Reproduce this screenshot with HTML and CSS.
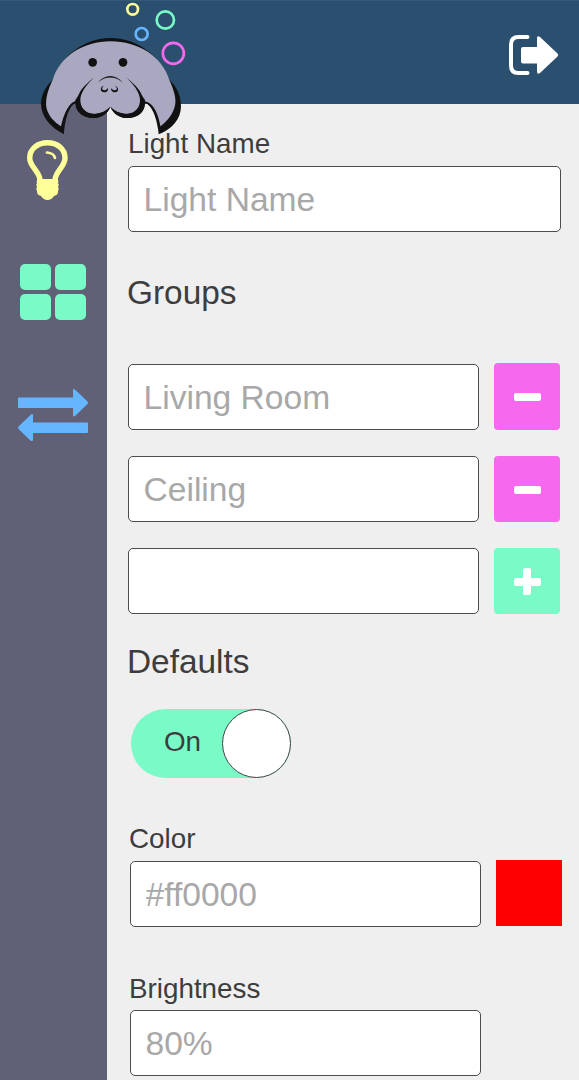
FILE: index.html
```html
<!DOCTYPE html>
<html lang="en">
<head>
<meta charset="utf-8">
<title>Light settings</title>
<link rel="stylesheet" href="styles.css">
</head>
<body>
<div class="app">
  <header class="topbar">
    <svg class="logo" viewBox="0 0 510 435" aria-label="Manatee">
      <g fill="none" stroke-width="8">
        <circle cx="308" cy="28" r="16" stroke="#ffff99"/>
        <circle cx="406" cy="60" r="26" stroke="#79fac7"/>
        <circle cx="335" cy="102" r="18" stroke="#66b5ff"/>
        <circle cx="430" cy="160" r="31.500" stroke="#f668ee"/>
      </g>
      <path fill="#111" d="M68 240C95 165 165 114 242 114S390 165 418 240C440 258 453 288 453 318C453 358 427 386 386 403C383 370 371 315 344 309C346 335 324 354 292 354C268 354 250 341 241 320C233 341 214 354 190 354C160 354 138 335 137 310C116 315 104 365 102 403C62 382 33 352 33 310C34 282 47 259 68 240Z"/>
      <path fill="#aaa8c0" d="M68 240C90 168 160 124 242 124S396 168 418 240C432 270 441 300 434 320C427 345 410 365 391 379C386 345 371 308 344 304L335 300C334 325 314 342 292 342C270 342 253 332 241 320C229 332 212 342 190 342C168 342 150 325 148 300L137 303C116 308 100 345 93 379C72 366 55 348 49 322C46 296 54 268 68 240Z"/>
      <path fill="#111" d="M193 232C170 250 153 267 146 284Q142 292 136 300L136 312C139 342 165 354 190 354C214 354 233 341 241 320C228 335 210 341 190 341C165 341 150 321 151 298C152 278 170 253 193 232Z"/>
      <path fill="#111" d="M288 232C311 250 328 267 335 284Q339 292 345 300L345 312C342 342 317 354 292 354C269 354 250 341 241 320C254 335 272 341 292 341C316 341 331 321 330 298C329 278 311 253 288 232Z"/>
      <circle cx="188" cy="187" r="13" fill="#111"/>
      <circle cx="279" cy="187" r="13" fill="#111"/>
      <path fill="#111" d="M203 248C225 221 256 221 279 248C256 227 225 227 203 248Z"/>
      <path fill="#111" d="M222 257C208 260 210 276 223 277C231 277 236 271 233 264C229 272 220 273 217 268C215 264 218 260 222 257Z"/>
      <path fill="#111" d="M254 257C268 260 267 276 255 277C247 277 242 271 244 264C248 272 258 273 260 268C262 264 259 260 254 257Z"/>
    </svg>
    <button class="logout" aria-label="Log out">
      <svg width="51" height="42" viewBox="0 0 51 42">
        <path d="M19.500 3H10.500Q3 3 3 10.500V31.500Q3 39 10.500 39H19.500" fill="none" stroke="#fff" stroke-width="4" stroke-linecap="round"/>
        <path d="M15 13H29V4.500Q29 1 32 3L49.500 19.500Q51 21 49.500 22.500L32 39Q29 41 29 37.500V29.500H15Q13 29.500 13 27.500V15Q13 13 15 13Z" fill="#fff"/>
      </svg>
    </button>
  </header>
  <div class="body">
    <nav class="sidebar">
      <a class="nav-bulb" aria-label="Lights">
        <svg width="42" height="62" viewBox="0 0 42 62">
          <path d="M13 40C12.500 31 2.700 27 2.700 18C2.700 8.500 11 2.800 20.500 2.800S38 8.500 38 18C38 27 28.500 31 28 40" fill="none" stroke="#ffff99" stroke-width="5.400"/>
          <path d="M20 12.500Q27 13 28 18" fill="none" stroke="#ffff99" stroke-width="2.700" stroke-linecap="round"/>
          <path d="M10.500 39H30.500Q32 41 31 43Q32.500 45 31 47Q32.500 49 31 51Q31.500 55 27 56Q24.500 60 20.500 60T14 56Q9.500 55 10 51Q8.500 49 10 47Q8.500 45 10 43Q9 41 10.500 39Z" fill="#ffff99"/>
        </svg>
      </a>
      <a class="nav-groups" aria-label="Groups"><i></i><i></i><i></i><i></i></a>
      <a class="nav-swap" aria-label="Transitions">
        <svg width="72" height="54" viewBox="0 0 72 54" fill="#66b5ff">
          <path d="M2 9.500H56V2.500Q56 0 58.500 2L70.500 13.500Q71.500 14.700 70.500 16L58.500 27.500Q56 29.500 56 27V20H2Q1 20 1 19V10.500Q1 9.500 2 9.500Z"/>
          <path d="M70 34.500H16V27.500Q16 25 13.500 27L1.500 38.500Q.5 39.700 1.500 41L13.500 52.500Q16 54 16 51.500V45H70Q71 45 71 44V35.500Q71 34.500 70 34.500Z"/>
        </svg>
      </a>
    </nav>
    <main class="content">
      <label class="label" for="name">Light Name</label>
      <input class="field" id="name" placeholder="Light Name">
      <h2 class="heading heading-groups">Groups</h2>
      <div class="groups">
        <div class="row"><input class="field" placeholder="Living Room"><button class="btn remove" aria-label="Remove"></button></div>
        <div class="row"><input class="field" placeholder="Ceiling"><button class="btn remove" aria-label="Remove"></button></div>
        <div class="row"><input class="field"><button class="btn add" aria-label="Add"></button></div>
      </div>
      <h2 class="heading heading-defaults">Defaults</h2>
      <button class="toggle"><span>On</span><span class="knob"></span></button>
      <section class="defaults">
        <label class="label" for="color">Color</label>
        <div class="row color-row"><input class="field" id="color" placeholder="#ff0000"><span class="swatch"></span></div>
        <label class="label" for="brightness">Brightness</label>
        <input class="field brightness" id="brightness" placeholder="80%">
      </section>
    </main>
  </div>
</div>
</body>
</html>
```
FILE: styles.css
```css
* { box-sizing: border-box; }
body { margin: 0; background: #efefef; color: #3d3d3d; font-family: "Liberation Sans", Arial, sans-serif; }
button { border: 0; padding: 0; margin: 0; font: inherit; color: inherit; background: none; }
svg { display: block; }
.app { height: 1080px; overflow: hidden; display: flex; flex-direction: column; }
.topbar { position: relative; flex: none; height: 104px; background: #2b4f6e; border-top: 1px solid #365977; display: flex; justify-content: flex-end; padding: 33px 20px 0 0; }
.logo { position: absolute; left: 30px; top: -1px; width: 170px; height: 145px; z-index: 1; }
.logout { height: 42px; }
.body { flex: 1; display: flex; }
.sidebar { flex: none; width: 107px; background: #606176; display: flex; flex-direction: column; align-items: flex-start; padding-top: 36px; }
.nav-bulb { margin-left: 27px; }
.nav-groups { margin: 62px 0 0 20px; display: grid; grid-template-columns: 30.5px 30.5px; grid-auto-rows: 25.5px; gap: 4.5px; }
.nav-groups i { background: #79fac7; border-radius: 5px; }
.nav-swap { margin: 68px 0 0 17px; }
.content { flex: 1; min-width: 0; padding: 24px 18px 0 21px; }
.label { display: block; margin: 0 0 6px 0; font-size: 27.8px; line-height: 32px; }
.heading { font-size: 33.4px; line-height: 40px; font-weight: 400; }
.heading-groups { margin: 41px 0 51px -1px; }
.heading-defaults { margin: 28px 0 27px -1px; }
.field { display: block; width: 100%; height: 66px; margin: 0; padding: 2px 14.5px 0; border: 1.5px solid #4c4c4c; border-radius: 5px; background: #fff; font: 33.6px/40px "Liberation Sans", Arial, sans-serif; outline: 0; }
.field::placeholder { color: #a8a8a8; opacity: 1; }
.groups { display: grid; gap: 26px; }
.row { display: flex; gap: 15px; }
.row .field { flex: 1; min-width: 0; }
.btn { flex: none; width: 66px; height: 66px; margin: 0 1px 0 0; border-radius: 4px; display: grid; place-items: center; }
.row:first-child .btn { height: 67px; margin-top: -1px; }
.groups .row { height: 66px; }
.remove { background: #f668ee; }
.add { background: #79fac7; }
.btn::before, .add::after { content: ""; grid-area: 1 / 1; width: 27px; height: 8px; border-radius: 2px; background: #fff; margin-top: 1px; }
.add::after { width: 8px; height: 27px; }
.toggle { margin-left: 3px; width: 160px; height: 69px; padding-left: 33px; border-radius: 35px; background: #79fac7; display: flex; align-items: center; justify-content: space-between; font-size: 27.8px; line-height: 32px; }
.toggle span:first-child { margin-top: -4px; }
.knob { flex: none; width: 69px; height: 69px; border: 1.5px solid #444; border-radius: 50%; background: #fff; }
.defaults { margin: 45px -1px 0 2px; }
.defaults .label { margin-left: -1px; }
.color-row { margin: 6px 0 45px; }
.defaults .label:first-child { margin-bottom: 6px; }
.color-row .field { margin-top: 0; }
.color-row + .label { padding-top: 1px; margin-bottom: 5px; }
.swatch { flex: none; width: 66px; height: 66px; margin: -1px 0 0; background: #f00; }
.brightness { width: 351px; }
```
